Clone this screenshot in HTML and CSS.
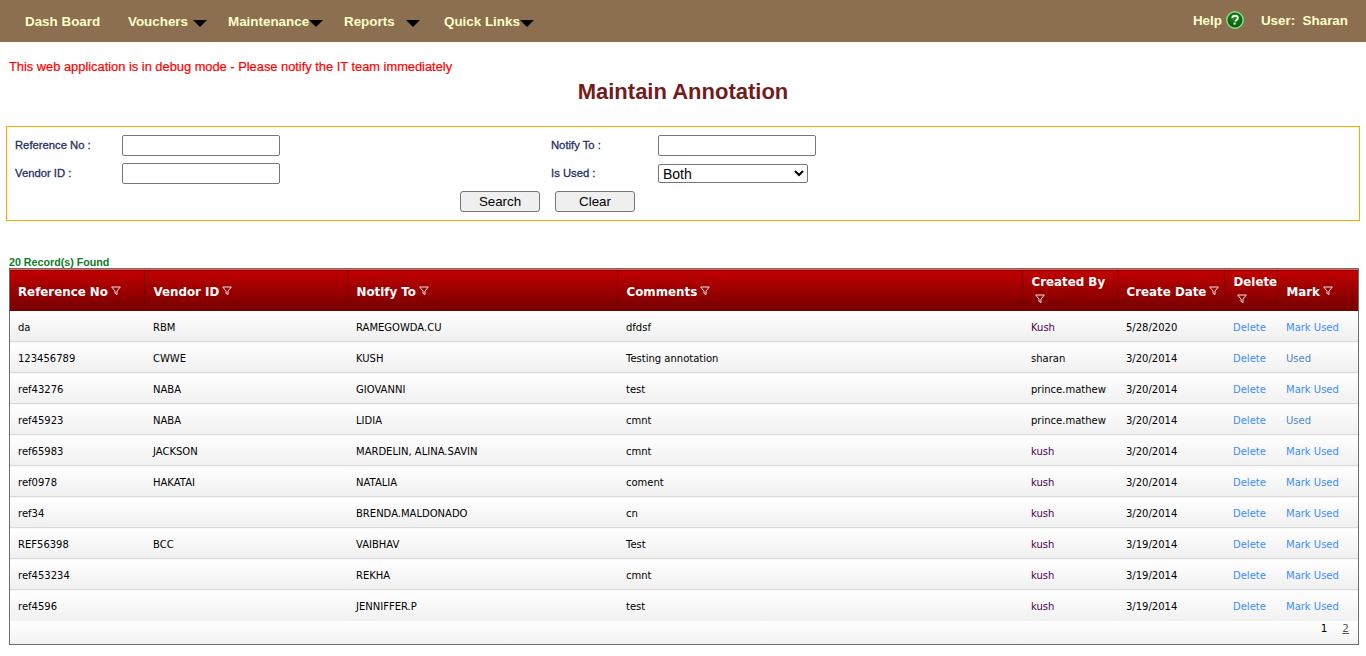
FILE: index.html
```html
<!DOCTYPE html>
<html lang="en">

<head>
    <meta charset="UTF-8">
    <meta name="viewport" content="width=device-width, initial-scale=1.0">
    <title>Maintain Annotation</title>
    <link rel="stylesheet" href="styles.css">
</head>

<body>

    <div id="topbar">
        <ul id="menu">
            <li class="m-dash">Dash Board</li>
            <li class="m-vouchers">Vouchers<span class="arrow"></span></li>
            <li class="m-maint">Maintenance<span class="arrow"></span></li>
            <li class="m-reports">Reports<span class="arrow"></span></li>
            <li class="m-links">Quick Links<span class="arrow"></span></li>
        </ul>
        <div id="userinfo">
            <span>Help</span>
            <svg class="help-icon" width="18" height="18" viewBox="0 0 18 18">
                <defs>
                    <radialGradient id="helpfill" cx="50%" cy="40%" r="60%">
                        <stop offset="0" stop-color="#1c8a1c"></stop>
                        <stop offset="1" stop-color="#045a04"></stop>
                    </radialGradient>
                </defs>
                <circle cx="9" cy="9" r="8.2" fill="url(#helpfill)" stroke="#8fdc8f" stroke-width="1.4"></circle>
                <path d="M6.3 7.2c0-1.6 1.2-2.5 2.8-2.5s2.7 .9 2.7 2.3c0 1.1-.7 1.6-1.4 2.1-.6 .4-.9 .7-.9 1.4" fill="none" stroke="#fff" stroke-width="1.9"></path>
                <rect x="7.6" y="11.6" width="2" height="2" fill="#fff"></rect>
            </svg>
            <span class="user">User:&nbsp; Sharan</span>
        </div>
    </div>

    <div id="debug">This web application is in debug mode - Please notify the IT team immediately</div>
    <h1>Maintain Annotation</h1>

    <div id="filters">
        <div class="filter-row">
            <label class="col-a">Reference No :</label>
            <input class="box col-b" type="text">
            <label class="col-c">Notify To :</label>
            <input class="box" type="text">
        </div>
        <div class="filter-row">
            <label class="col-a">Vendor ID :</label>
            <input class="box col-b" type="text">
            <label class="col-c">Is Used :</label>
            <select class="used-select">
                <option>Both</option>
            </select>
        </div>
        <div class="filter-buttons">
            <input class="btn" type="button" value="Search">
            <input class="btn" type="button" value="Clear">
        </div>
    </div>

    <div id="count">20 Record(s) Found</div>

    <div id="grid">
        <table id="table">
            <colgroup>
                <col class="c1"><col class="c2"><col class="c3"><col class="c4"><col class="c5"><col class="c6"><col class="c7"><col class="c8">
            </colgroup>
            <tr>
                <th>Reference No<svg class="funnel" viewBox="0 0 10 10"><path d="M.7 1h8.6L6 5v3.6L4 7.4V5z"></path></svg></th>
                <th>Vendor ID<svg class="funnel" viewBox="0 0 10 10"><path d="M.7 1h8.6L6 5v3.6L4 7.4V5z"></path></svg></th>
                <th>Notify To<svg class="funnel" viewBox="0 0 10 10"><path d="M.7 1h8.6L6 5v3.6L4 7.4V5z"></path></svg></th>
                <th>Comments<svg class="funnel" viewBox="0 0 10 10"><path d="M.7 1h8.6L6 5v3.6L4 7.4V5z"></path></svg></th>
                <th>Created By<svg class="funnel low" viewBox="0 0 10 10"><path d="M.7 1h8.6L6 5v3.6L4 7.4V5z"></path></svg></th>
                <th>Create Date<svg class="funnel" viewBox="0 0 10 10"><path d="M.7 1h8.6L6 5v3.6L4 7.4V5z"></path></svg></th>
                <th>Delete<svg class="funnel low" viewBox="0 0 10 10"><path d="M.7 1h8.6L6 5v3.6L4 7.4V5z"></path></svg></th>
                <th>Mark<svg class="funnel" viewBox="0 0 10 10"><path d="M.7 1h8.6L6 5v3.6L4 7.4V5z"></path></svg></th>
            </tr>
            <tr><td>da</td><td>RBM</td><td>RAMEGOWDA.CU</td><td>dfdsf</td><td class="who">Kush</td><td>5/28/2020</td><td class="lnk">Delete</td><td class="lnk">Mark Used</td></tr>
            <tr><td>123456789</td><td>CWWE</td><td>KUSH</td><td>Testing annotation</td><td>sharan</td><td>3/20/2014</td><td class="lnk">Delete</td><td class="lnk is-used">Used</td></tr>
            <tr><td>ref43276</td><td>NABA</td><td>GIOVANNI</td><td>test</td><td>prince.mathew</td><td>3/20/2014</td><td class="lnk">Delete</td><td class="lnk">Mark Used</td></tr>
            <tr><td>ref45923</td><td>NABA</td><td>LIDIA</td><td>cmnt</td><td>prince.mathew</td><td>3/20/2014</td><td class="lnk">Delete</td><td class="lnk is-used">Used</td></tr>
            <tr><td>ref65983</td><td>JACKSON</td><td>MARDELIN, ALINA.SAVIN</td><td>cmnt</td><td class="who">kush</td><td>3/20/2014</td><td class="lnk">Delete</td><td class="lnk">Mark Used</td></tr>
            <tr><td>ref0978</td><td>HAKATAI</td><td>NATALIA</td><td>coment</td><td class="who">kush</td><td>3/20/2014</td><td class="lnk">Delete</td><td class="lnk">Mark Used</td></tr>
            <tr><td>ref34</td><td></td><td>BRENDA.MALDONADO</td><td>cn</td><td class="who">kush</td><td>3/20/2014</td><td class="lnk">Delete</td><td class="lnk">Mark Used</td></tr>
            <tr><td>REF56398</td><td>BCC</td><td>VAIBHAV</td><td>Test</td><td class="who">kush</td><td>3/19/2014</td><td class="lnk">Delete</td><td class="lnk">Mark Used</td></tr>
            <tr><td>ref453234</td><td></td><td>REKHA</td><td>cmnt</td><td class="who">kush</td><td>3/19/2014</td><td class="lnk">Delete</td><td class="lnk">Mark Used</td></tr>
            <tr><td>ref4596</td><td></td><td>JENNIFFER.P</td><td>test</td><td class="who">kush</td><td>3/19/2014</td><td class="lnk">Delete</td><td class="lnk">Mark Used</td></tr>
        </table>
        <div id="pager"><span>1</span><a href="#">2</a></div>
    </div>

</body>

</html>
```

FILE: styles.css
```css
* {
    box-sizing: border-box;
}

body {
    margin: 0;
    background: #fff;
    font-family: "Liberation Sans", Arial, sans-serif;
}

#topbar {
    display: flex;
    justify-content: space-between;
    align-items: center;
    height: 42px;
    padding: 0 18px 0 25px;
    background: #8b6f50;
    color: #ffffc8;
    font-size: 13.4px;
    font-weight: bold;
}

#menu {
    display: flex;
    margin: 0;
    padding: 0;
    list-style: none;
}

#menu li {
    display: flex;
    align-items: center;
}

.m-dash { width: 103px; }
.m-vouchers { width: 100px; }
.m-maint { width: 116px; }
.m-reports { width: 100px; }

.arrow {
    display: inline-block;
    margin-top: 5px;
    border-left: 7px solid transparent;
    border-right: 7px solid transparent;
    border-top: 7px solid #000;
}

.m-vouchers .arrow { margin-left: 5px; }
.m-reports .arrow { margin-left: 11px; }

#userinfo {
    display: flex;
    align-items: center;
    margin-bottom: 2px;
}

.help-icon {
    margin-left: 4px;
}

.user {
    margin-left: 17px;
}

#debug {
    margin: 18px 0 0 9px;
    color: #f00;
    font-size: 12.85px;
    line-height: 14px;
    -webkit-text-stroke: 0.2px #f00;
}

h1 {
    margin: 4px 0 0;
    color: #721c1c;
    font-size: 22px;
    line-height: 27px;
    text-align: center;
}

#filters {
    height: 95px;
    margin: 21px 6px 0;
    padding: 8px 8px 0;
    border: 1px solid #ffa500;
}

.filter-row {
    display: flex;
    align-items: center;
    height: 21px;
    margin-bottom: 7px;
}

.filter-row label {
    margin-bottom: 2px;
    color: #1f2f5f;
    font-size: 11.25px;
    font-weight: normal;
    -webkit-text-stroke: 0.3px #1f2f5f;
}

.col-a {
    width: 107px;
}

.col-b {
    margin-right: 271px;
}

.col-c {
    width: 107px;
}

.box {
    width: 158px;
    height: 21px;
    border: 1px solid #767676;
    border-radius: 2px;
    background: #fff;
}

.used-select {
    width: 150px;
    height: 19px;
    padding: 0 0 2px;
    border: 1px solid #767676;
    border-radius: 2px;
    background: #fff;
    color: #000;
    font-family: "Liberation Sans", Arial, sans-serif;
    font-size: 14px;
}

.filter-buttons {
    display: flex;
    gap: 15px;
    margin-left: 445px;
}

.btn {
    width: 80px;
    height: 21px;
    padding: 0;
    border: 1px solid #767676;
    border-radius: 3px;
    background: #efefef;
    color: #000;
    font-family: "Liberation Sans", Arial, sans-serif;
    font-size: 13.33px;
}

#count {
    margin: 35px 0 0 9px;
    color: #0a7d1e;
    font-size: 10.7px;
    font-weight: bold;
    line-height: 12px;
}

#grid {
    display: flex;
    flex-direction: column;
    width: 1350px;
    height: 377px;
    margin: 0 0 0 9px;
    border: 1px solid #6e6e6e;
}

#table {
    width: 1348px;
    border-collapse: collapse;
    table-layout: fixed;
    font-family: "DejaVu Sans", Verdana, sans-serif;
}

.c1 { width: 134px; }
.c2 { width: 203px; }
.c3 { width: 270px; }
.c4 { width: 405px; }
.c5 { width: 95px; }
.c6 { width: 107px; }
.c7 { width: 53px; }
.c8 { width: 81px; }

#table th {
    height: 41px;
    padding: 3px 0 0 9px;
    border-top: 1px solid #e06060;
    border-left: 1px solid #7a0000;
    background: linear-gradient(#c20000, #730000);
    color: #fff;
    font-size: 11.85px;
    font-weight: bold;
    line-height: 16px;
    text-align: left;
    white-space: nowrap;
}

#table th:first-child {
    padding-left: 8px;
    border-left: 0;
}

.funnel {
    width: 10px;
    height: 10px;
    margin-left: 3px;
    fill: none;
    stroke: #fff;
    stroke-width: 0.9;
}

.funnel.low {
    display: block;
    margin: 4px 0 6px 3px;
}

#table td {
    height: 31px;
    padding: 2px 0 0 9px;
    border-bottom: 1px solid #d9d9d9;
    background: linear-gradient(#fff, #f0f0f0);
    color: #000;
    font-size: 10px;
    white-space: nowrap;
}

#table td:first-child {
    padding-left: 8px;
}

#table tr:nth-child(2) td {
    padding-top: 4px;
}

#table tr:last-child td {
    border-bottom: 0;
}

#table td.who {
    color: #4b0050;
}

#table td.lnk {
    color: #3a8cff;
}

#table td.is-used {
    color: #4f86c6;
}

#pager {
    display: flex;
    flex: 1;
    justify-content: flex-end;
    gap: 15px;
    padding: 1px 9px 0 0;
    background: linear-gradient(#fff, #f2f2f2);
    color: #000;
    font-family: "DejaVu Sans", Verdana, sans-serif;
    font-size: 10.5px;
    line-height: 13px;
}

#pager a {
    color: #555;
}
```
